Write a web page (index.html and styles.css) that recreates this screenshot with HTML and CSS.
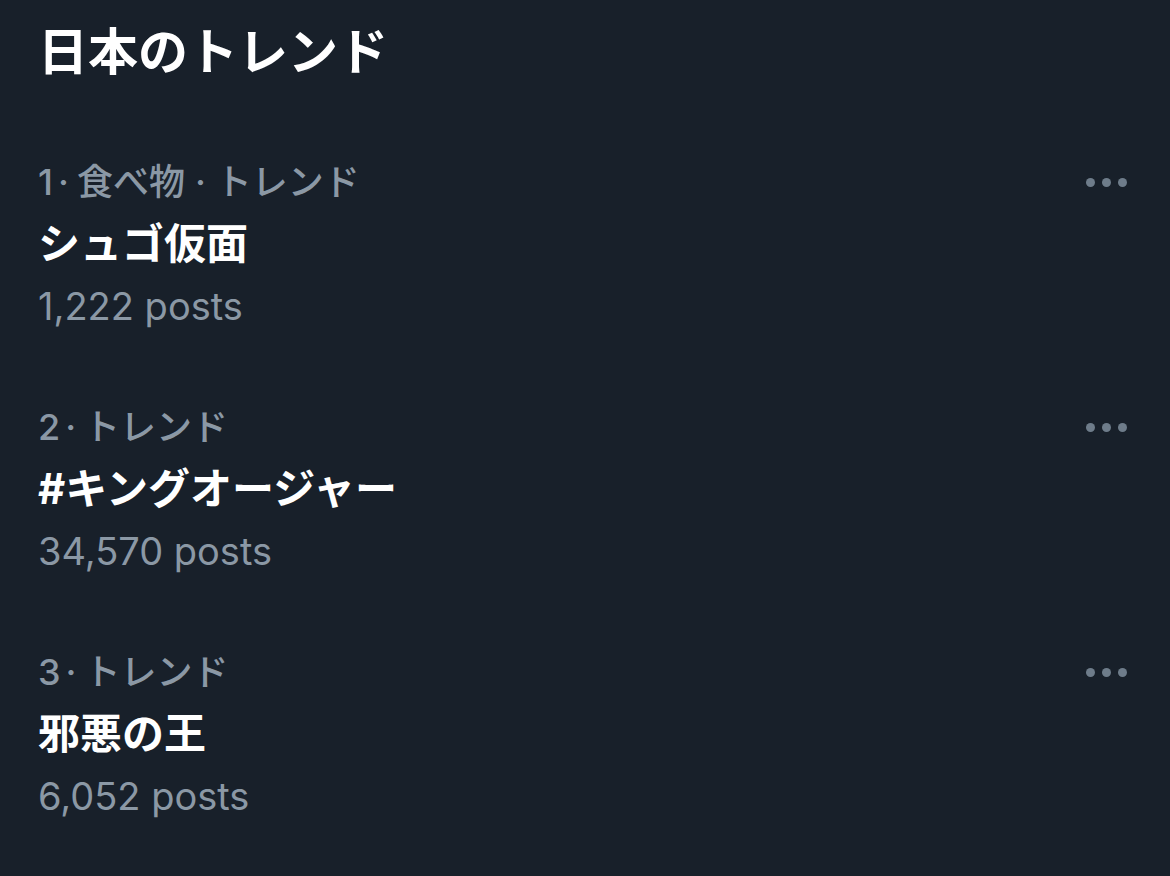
FILE: index.html
```html
<!DOCTYPE html>
<html lang="ja">
<head>
<meta charset="utf-8">
<link rel="stylesheet" href="styles.css">
</head>
<body>
<div class="panel">
  <h1 class="heading">日本のトレンド</h1>
  <div class="trend">
    <div class="trend-body">
      <div class="meta">1<span class="dot">·</span>食べ物<span class="dot wide">·</span>トレンド</div>
      <div class="title">シュゴ仮面</div>
      <div class="count">1,222 posts</div>
    </div>
    <div class="more"><span></span><span></span><span></span></div>
  </div>
  <div class="trend">
    <div class="trend-body">
      <div class="meta">2<span class="dot">·</span>トレンド</div>
      <div class="title">#キングオージャー</div>
      <div class="count">34,570 posts</div>
    </div>
    <div class="more"><span></span><span></span><span></span></div>
  </div>
  <div class="trend">
    <div class="trend-body">
      <div class="meta">3<span class="dot">·</span>トレンド</div>
      <div class="title">邪悪の王</div>
      <div class="count">6,052 posts</div>
    </div>
    <div class="more"><span></span><span></span><span></span></div>
  </div>
</div>
</body>
</html>
```

FILE: styles.css
```css
html, body {
  margin: 0;
  padding: 0;
  background: #18202a;
}
body {
  width: 1170px;
  height: 876px;
  overflow: hidden;
  font-family: "Inter", "Noto Sans CJK JP", sans-serif;
}
.panel {
  padding: 22px 43px 0 38px;
}
.heading {
  margin: 0;
  font-size: 50px;
  line-height: 60px;
  font-weight: 700;
  color: #ffffff;
}
.trend {
  display: flex;
  justify-content: space-between;
  align-items: flex-start;
  padding: 70px 0 22px;
}
.trend + .trend {
  padding-top: 39px;
}
.meta {
  font-size: 36px;
  line-height: 60px;
  font-weight: 500;
  color: #8b98a5;
}
.dot {
  margin: 0 8px 0 5px;
}
.dot.wide {
  margin: 0 10px;
}
.title {
  font-size: 42px;
  line-height: 64px;
  font-weight: 700;
  color: #ffffff;
}
.count {
  font-size: 38px;
  line-height: 60px;
  font-weight: 400;
  color: #8b98a5;
}
.more {
  display: flex;
  gap: 7px;
  height: 60px;
  align-items: center;
}
.more span {
  width: 9px;
  height: 9px;
  border-radius: 50%;
  background: #6e7c8a;
}
```
